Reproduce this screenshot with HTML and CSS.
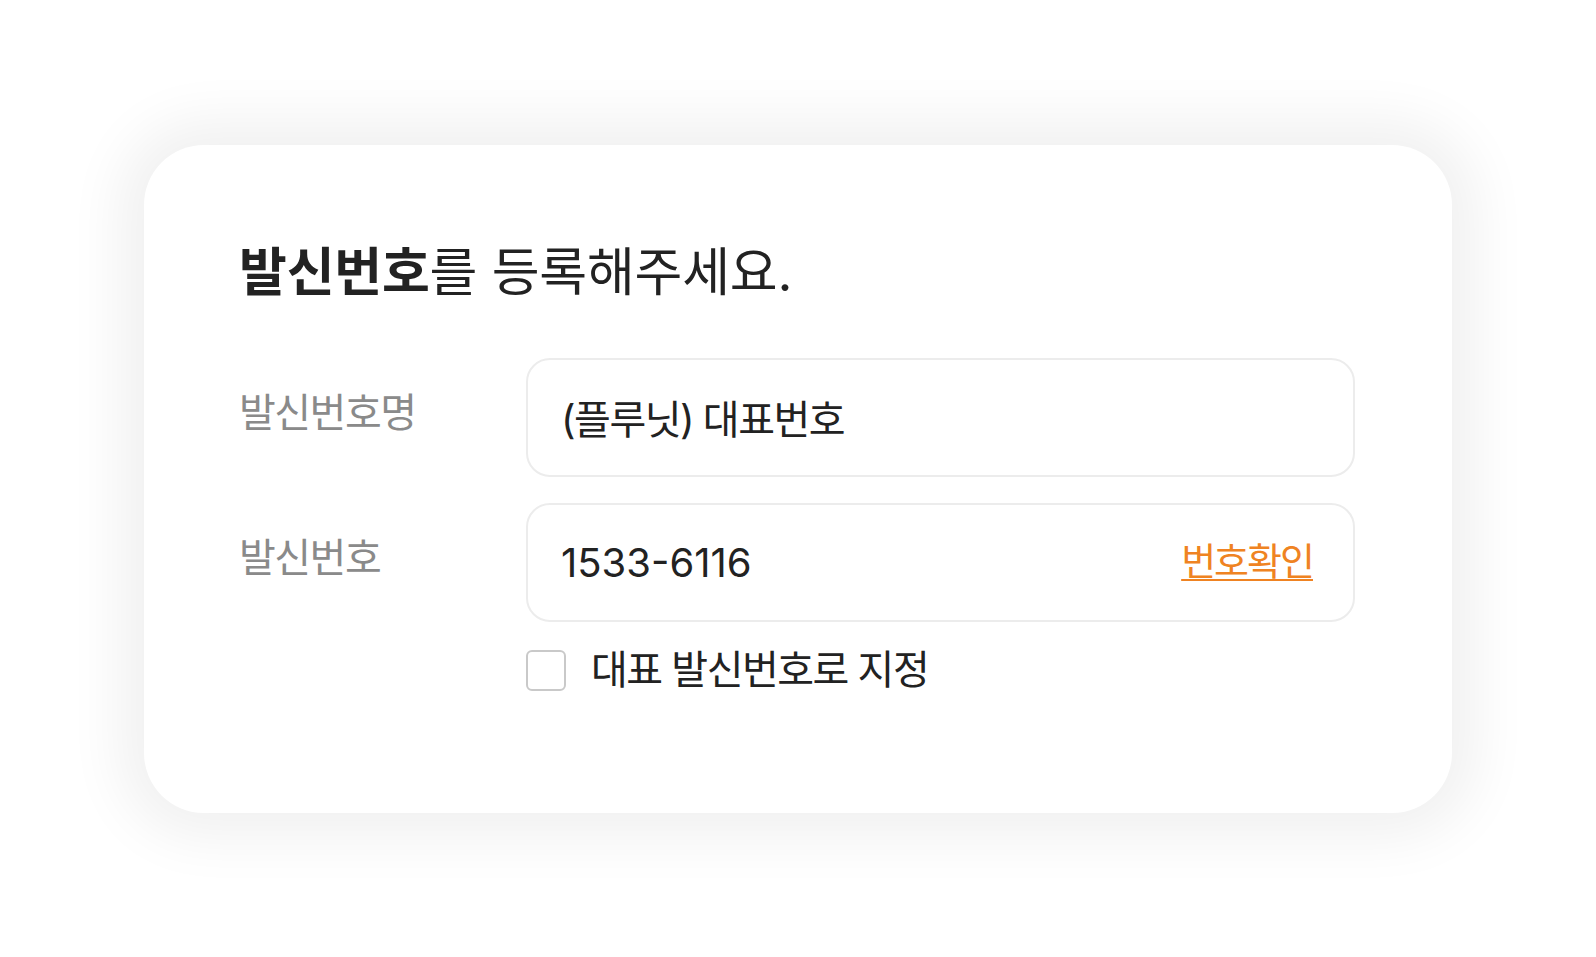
FILE: index.html
```html
<!DOCTYPE html>
<html lang="ko">
<head>
<meta charset="utf-8">
<title>발신번호 등록</title>
<link rel="stylesheet" href="styles.css">
</head>
<body>
<div class="stage">
  <section class="card">
    <h1 class="title"><strong>발신번호</strong>를 등록해주세요.</h1>
    <div class="form">
      <div class="label">발신번호명</div>
      <div class="field"><span class="value">(플루닛) 대표번호</span></div>
      <div class="label">발신번호</div>
      <div class="field"><span class="value num">1533-6116</span><a class="verify" href="#">번호확인</a></div>
      <div class="spacer"></div>
      <label class="check"><span class="box"></span><span class="check-text">대표 발신번호로 지정</span></label>
    </div>
  </section>
</div>
</body>
</html>
```
FILE: styles.css
```css
html, body {
  margin: 0;
  padding: 0;
  background: #ffffff;
}
body {
  font-family: "Inter", "Noto Sans CJK KR", "Noto Sans", sans-serif;
  color: #222222;
}
.stage {
  width: 1596px;
  height: 957px;
  display: flex;
  align-items: center;
  justify-content: center;
}
.card {
  width: 1308px;
  height: 668px;
  box-sizing: border-box;
  background: #ffffff;
  border-radius: 60px;
  box-shadow: 0 0 55px 25px rgba(0, 0, 0, 0.06);
  padding: 94px 97px 0 95px;
}
.title {
  margin: 0;
  font-size: 52px;
  line-height: 68px;
  font-weight: 400;
  letter-spacing: -0.2px;
  color: #222222;
}
.title strong {
  font-weight: 700;
}
.form {
  margin-top: 51px;
  display: grid;
  grid-template-columns: 287px 829px;
  row-gap: 26px;
  align-items: center;
}
.label {
  font-size: 40px;
  letter-spacing: -1.5px;
  color: #8a8a8a;
  line-height: 1;
  margin-top: -8px;
}
.field {
  height: 119px;
  box-sizing: border-box;
  border: 2px solid #ececec;
  border-radius: 24px;
  padding: 0 40px 0 33px;
  display: flex;
  align-items: center;
  justify-content: space-between;
}
.value {
  font-size: 40px;
  letter-spacing: -1.5px;
  color: #222222;
}
.num {
  letter-spacing: 0;
}
.verify {
  font-size: 38px;
  letter-spacing: -2px;
  color: #ef8322;
  text-decoration: underline;
  text-decoration-thickness: 2px;
  text-underline-offset: 4px;
  padding-bottom: 8px;
}
.spacer {
  height: 1px;
}
.check {
  display: flex;
  align-items: center;
  gap: 25px;
  margin-top: 2px;
}
.box {
  width: 40px;
  height: 41px;
  box-sizing: border-box;
  border: 2px solid #c9c9c9;
  border-radius: 6px;
  flex: none;
}
.check-text {
  font-size: 40px;
  letter-spacing: -1.5px;
  color: #222222;
  line-height: 1;
}
```
